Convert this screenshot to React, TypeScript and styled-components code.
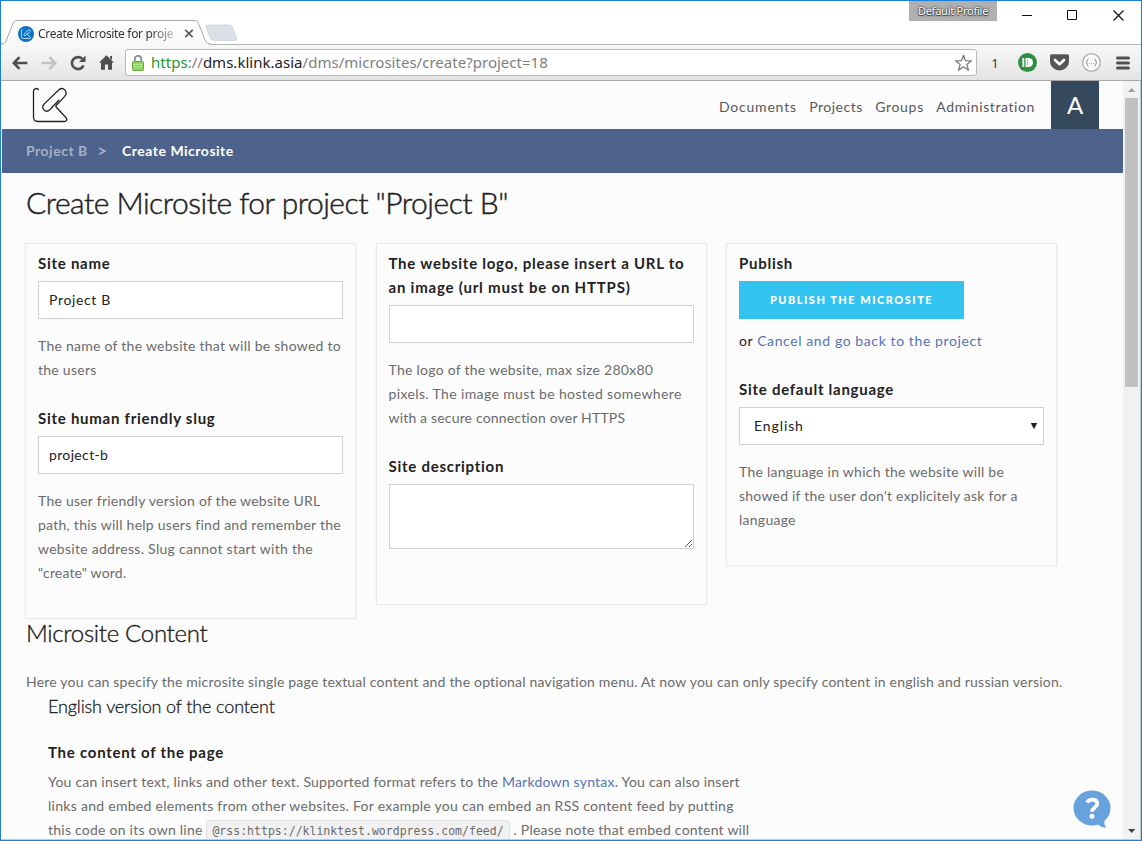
import React from 'react';
import styled, { createGlobalStyle } from 'styled-components';

const GlobalStyle = createGlobalStyle`
  * { box-sizing: border-box; }
  body { margin: 0; background: #fff; }
  p, h1, h2, h3 { margin: 0; font-weight: 400; }
`;

const uiFont = `'Noto Sans', 'Open Sans', sans-serif`;
const siteFont = `Lato, 'Open Sans', sans-serif`;

/* ---------- browser window ---------- */

const Window = styled.div`
  width: 1142px;
  height: 841px;
  border: 1px solid #1c80d8;
  display: flex;
  flex-direction: column;
  overflow: hidden;
  background: #fff;
`;

const TitleBar = styled.div`
  height: 43px;
  flex: none;
  display: flex;
  align-items: flex-start;
`;

const Tab = styled.div`
  position: relative;
  width: 210px;
  height: 25px;
  margin-top: 19px;
  flex: none;
  display: flex;
  align-items: center;
  padding: 2px 0 0 17px;
  z-index: 1;
  svg { flex: none; }
`;

const TabShape = styled.svg`
  position: absolute;
  left: 0;
  top: 0;
  z-index: -1;
`;

const TabTitle = styled.span`
  flex: none;
  width: 146px;
  margin-left: 4px;
  white-space: nowrap;
  font: 12px/16px ${uiFont};
  letter-spacing: -0.32px;
  color: #333;
  mask-image: linear-gradient(to right, #000 112px, transparent 146px);
`;

const NewTab = styled.svg`
  margin: 23px 0 0 -7px;
  flex: none;
`;

const Profile = styled.div`
  width: 88px;
  height: 20px;
  margin-left: auto;
  background: #b0b0b0;
  color: #fff;
  font: 11px/20px ${uiFont};
  letter-spacing: -0.25px;
  text-align: center;
  text-shadow: 0 0 2px #333, 0 0 2px #444, 0 1px 1px #444;
`;

const WindowControls = styled.div`
  display: flex;
  align-items: center;
  gap: 35px;
  height: 28px;
  margin: 0 17px 0 25px;
`;

const Toolbar = styled.div`
  height: 37px;
  flex: none;
  display: flex;
  align-items: center;
  padding: 0 1px 0 4px;
  border-top: 1px solid #b5b5b5;
  border-bottom: 1px solid #a9a9a9;
  background: linear-gradient(#f8f8f8, #e4e4e4);
`;

const ToolCell = styled.div<{ $w: number }>`
  width: ${p => p.$w}px;
  flex: none;
  display: flex;
  justify-content: center;
  font: 13px/18px ${uiFont};
  color: #333;
  svg { display: block; }
`;

const Omnibox = styled.div`
  width: 852px;
  height: 27px;
  flex: none;
  margin: 0 2px 0 4px;
  display: flex;
  align-items: center;
  border: 1px solid #b9b9b9;
  border-radius: 3px;
  background: #fff;
  padding: 0 3px 0 6px;
  svg { flex: none; }
`;

const Url = styled.span`
  flex: 1;
  margin: -2px 0 0 7px;
  font: 15px/22px ${uiFont};
  letter-spacing: 0.02px;
  color: #808080;
  white-space: nowrap;
`;
const Scheme = styled.span`color: #249a33;`;
const Host = styled.span`color: #222;`;

const Viewport = styled.div`
  flex: 1;
  min-height: 0;
  display: flex;
  padding-left: 1px;
  border-right: 1px solid #c9c9c9;
  border-bottom: 1px solid #c9c9c9;
`;

const Page = styled.div`
  position: relative;
  width: 1121px;
  flex: none;
  overflow: hidden;
  background: #fcfcfc;
  font-family: ${siteFont};
  font-size: 14px;
  line-height: 24px;
  color: #222;
`;

const Scrollbar = styled.div`
  flex: 1;
  display: flex;
  flex-direction: column;
  align-items: center;
  background: #f1f1f1;
  svg { display: block; flex: none; }
`;

const Thumb = styled.div`
  width: 13px;
  height: 289px;
  margin-bottom: auto;
  background: #c1c1c1;
`;

/* ---------- site ---------- */

const Header = styled.header`
  height: 48px;
  display: flex;
  align-items: center;
  padding: 0 24px 0 30px;
`;

const Nav = styled.nav`
  display: flex;
  gap: 12.4px;
  margin: 4px 16px 0 auto;
`;

const NavLink = styled.a<{ $track: number }>`
  color: #585858;
  letter-spacing: ${p => p.$track}px;
`;

const Avatar = styled.div`
  width: 48px;
  height: 48px;
  background: #34495e;
  color: #fff;
  font-size: 24px;
  line-height: 47px;
  text-align: center;
`;

const Breadcrumb = styled.div`
  height: 44px;
  display: flex;
  align-items: center;
  padding-left: 24px;
  background: #4d638c;
  color: #fff;
  font-weight: 700;
  letter-spacing: 0.5px;
`;
const Crumb = styled.span`color: #a6b1c8;`;
const Separator = styled(Crumb)`
  margin: 0 14.5px 0 9.5px;
  font-size: 17px;
`;

const Body = styled.main`
  padding: 0 24px;
`;

const PageTitle = styled.h1`
  height: 70px;
  padding-top: 9px;
  font-size: 30px;
  line-height: 40px;
  font-weight: 300;
  letter-spacing: -0.5px;
  -webkit-text-stroke: 0.45px #222;
`;

const Cards = styled.div`
  display: flex;
  align-items: flex-start;
  gap: 19.5px;
  margin-left: -1px;
`;

const Card = styled.section<{ $bottom: number }>`
  width: 331px;
  flex: none;
  padding: 8px 12px ${p => p.$bottom}px;
  border: 1px solid #eaeaea;
  box-shadow: 0 0 2px rgba(0, 0, 0, 0.07);
`;

const Label = styled.label`
  display: block;
  margin: -1px 0 6px;
  font-size: 15px;
  font-weight: 700;
  line-height: 24px;
  letter-spacing: 0.74px;
  white-space: nowrap;
`;

const Input = styled.input<{ $track?: number }>`
  display: block;
  width: 305px;
  height: 38px;
  padding: 5px 10px 7px;
  border: 1px solid #d1d1d1;
  background: #fff;
  color: #222;
  font: 14px ${siteFont};
  letter-spacing: ${p => p.$track ?? 0.35}px;
`;

const TextArea = styled.textarea`
  display: block;
  width: 305px;
  height: 65px;
  border: 1px solid #d1d1d1;
  background: #fff;
`;

const Select = styled.div`
  width: 305px;
  height: 38px;
  display: flex;
  align-items: center;
  justify-content: space-between;
  padding: 0 5px 0 14px;
  border: 1px solid #d1d1d1;
  background: #fff;
  letter-spacing: 0.9px;
`;

const Help = styled.p`
  margin-top: 15px;
  color: #6b6b6b;
  white-space: nowrap;
`;

const Line = styled.span<{ $track?: number }>`
  display: block;
  letter-spacing: ${p => p.$track ?? 0.26}px;
`;

const Field = styled.div`
  & + & { margin-top: 25px; }
  display: flow-root;
`;

const Button = styled.button`
  display: block;
  width: 225px;
  height: 38px;
  border: 0;
  padding: 0 0 2px;
  background: #33c3f0;
  color: #fff;
  font: 900 11px ${siteFont};
  letter-spacing: 1.5px;
`;

const CancelRow = styled.p`
  margin-top: 10px;
  letter-spacing: 0.6px;
`;

const Link = styled.a`color: #5474b4;`;

const SectionTitle = styled.h2`
  font-size: 24px;
  line-height: 32px;
  margin-top: -2px;
  font-weight: 300;
  letter-spacing: -0.31px;
  -webkit-text-stroke: 0.35px #222;
`;

const Intro = styled.p`
  margin-top: 21px;
  color: #6b6b6b;
  white-space: nowrap;
`;

const Content = styled.div`
  padding-left: 22px;
`;

const ContentTitle = styled.h3`
  font-size: 18px;
  line-height: 26px;
  font-weight: 300;
  letter-spacing: -0.13px;
  -webkit-text-stroke: 0.3px #222;
  margin: -1px 0 22px;
`;

const Instructions = styled.div`
  color: #6b6b6b;
  white-space: nowrap;
`;

const Code = styled.code`
  padding: 3px 5px;
  border: 1px solid #e1e1e1;
  border-radius: 4px;
  background: #f1f1f1;
  font: 11.52px 'DejaVu Sans Mono', monospace;
  letter-spacing: 0;
`;

const HelpBubble = styled.svg`
  position: absolute;
  right: 12px;
  bottom: 10px;
`;

const clipPath =
  'M6.200 2.500C5.200.3 1 .3 1 4v25.500C1 32.500 2.500 34 5.500 34H31.500c3 0 3.600-2.200 1.900-4L23.800 19.800c-.7-.8-.7-1.300.1-2.100l8.300-8.800C36 4.500 31-1.200 26.400 2.200L11.800 16.400c-4 4.200 1.300 9.700 5.500 5.800L26.500 12.500';

const BackArrow = ({ color, flip }: { color: string; flip?: boolean }) => (
  <svg width="16" height="14" viewBox="0 0 16 14" transform={flip ? 'scale(-1 1)' : undefined}>
    <path d="M7.500 1.200L1.800 7l5.700 5.800M2.200 7H15.300" fill="none" stroke={color} strokeWidth="2.600" />
  </svg>
);

export default function App() {
  return (
    <Window>
      <GlobalStyle />
      <TitleBar>
        <Tab>
          <TabShape width="210" height="25" viewBox="0 0 210 25">
            <defs>
              <linearGradient id="tab" x1="0" y1="0" x2="0" y2="1">
                <stop offset="0" stopColor="#fff" />
                <stop offset="1" stopColor="#f8f8f8" />
              </linearGradient>
            </defs>
            <path d="M0 24.500C3 24.500 4 23.500 5 21L12 3.500C13 1.200 14 .5 16 .5H193C195.500 .5 196.500 1.200 197.500 3.500L204.500 21C205.500 23.500 207 24.500 210 24.500V26H0Z" fill="url(#tab)" />
            <path d="M0 24C3 24 4 23 5 21L12 3.500C13 1.200 14 .5 16 .5H193C195.500 .5 196.500 1.200 197.500 3.500L204.500 21C205.500 23 207 24 210 24" fill="none" stroke="#a8a8a8" />
          </TabShape>
          <svg width="16" height="16" viewBox="0 0 16 16">
            <circle cx="8" cy="8" r="8" fill="#0d71c4" />
            <path d={clipPath} transform="translate(3.200 3.300) scale(.27)" fill="none" stroke="#cfe5f7" strokeWidth="3.200" />
          </svg>
          <TabTitle>Create Microsite for proje</TabTitle>
          <svg width="10" height="9" viewBox="0 0 10 9">
            <path d="M1.300.8l7.400 7.400M8.700.8L1.300 8.200" stroke="#5a5a5a" strokeWidth="1.700" />
          </svg>
        </Tab>
        <NewTab width="34" height="18" viewBox="0 0 34 18">
          <path d="M4 1H25.500Q27.500 1 28.300 3L32.600 14Q33.500 16.500 31 16.500H10Q7.500 16.500 6.600 14.500L2 3.500Q1.200 1 4 1Z" fill="#dbdfe7" stroke="#cdd0d8" strokeWidth=".8" />
        </NewTab>
        <Profile>Default Profile</Profile>
        <WindowControls>
          <svg width="10" height="10"><path d="M0 5.500H10" stroke="#111" /></svg>
          <svg width="10" height="10"><path d="M.5.5h9v9h-9z" fill="none" stroke="#111" /></svg>
          <svg width="12" height="11"><path d="M1.500.5l10 10M11.500.5l-10 10" stroke="#111" strokeWidth="1.200" /></svg>
        </WindowControls>
      </TitleBar>

      <Toolbar>
        <ToolCell $w={29}><BackArrow color="#4f4f4f" /></ToolCell>
        <ToolCell $w={29}><BackArrow color="#c3c3c3" flip /></ToolCell>
        <ToolCell $w={29}>
          <svg width="16" height="16" viewBox="0 0 16 16">
            <path d="M13.500 10.500A6 6 0 1 1 12.300 3.900" fill="none" stroke="#4f4f4f" strokeWidth="2.600" />
            <path d="M15.500.5V7H9z" fill="#4f4f4f" />
          </svg>
        </ToolCell>
        <ToolCell $w={29}>
          <svg width="15" height="15" viewBox="0 0 15 15">
            <path d="M7.500.2L15 7.800H13V14.700H9V9.500H6V14.700H2V7.800H0L7.500.2ZM11 1h2v4l-2-2z" fill="#4f4f4f" />
          </svg>
        </ToolCell>
        <Omnibox>
          <svg width="12" height="16" viewBox="0 0 12 16">
            <path d="M2.800 8V4a3.200 3.200 0 0 1 6.400 0V8" fill="none" stroke="#8d8d8d" strokeWidth="1.800" />
            <rect x=".5" y="6.500" width="11" height="9" rx="1" fill="#8ed65c" stroke="#6aa84a" />
            <path d="M1.500 9.500h9M1.500 12h9" stroke="#b4ea8c" />
          </svg>
          <Url><Scheme>https</Scheme>://<Host>dms.klink.asia</Host>/dms/microsites/create?project=18</Url>
          <svg width="19" height="18" viewBox="0 0 19 18">
            <path d="M9.500 1.200l2 5.500 6 .1-4.700 3.600 1.700 5.800-5-3.400-5 3.400 1.700-5.800L1.500 6.800l6-.1z" fill="#fff" stroke="#777" strokeWidth="1.200" strokeLinejoin="round" />
          </svg>
        </Omnibox>
        <ToolCell $w={32}>1</ToolCell>
        <ToolCell $w={32}>
          <svg width="19" height="19" viewBox="0 0 19 19">
            <circle cx="9.500" cy="9.500" r="9.500" fill="#2f9140" />
            <path d="M5.300 5v9" stroke="#fff" strokeWidth="1.800" />
            <path d="M7.500 5h3a4.500 4.500 0 0 1 0 9h-3z" fill="#fff" />
            <path d="M9.500 6v7" stroke="#2f9140" strokeWidth=".4" />
          </svg>
        </ToolCell>
        <ToolCell $w={32}>
          <svg width="19" height="17" viewBox="0 0 19 17">
            <path d="M1.500.3h16Q19 .3 19 2v5.500a9.500 9 0 0 1-19 0V2Q0 .3 1.500.3z" fill="#555" />
            <path d="M5 6l4.500 4.300L14 6" fill="none" stroke="#fff" strokeWidth="2.600" strokeLinecap="round" strokeLinejoin="round" />
          </svg>
        </ToolCell>
        <ToolCell $w={32}>
          <svg width="19" height="19" viewBox="0 0 19 19">
            <circle cx="9.500" cy="9.500" r="8.800" fill="#fafafa" stroke="#aaa" strokeWidth="1.200" />
            <path d="M6.500 6C4.500 6 6 9.500 4 9.500c2 0 .5 3.500 2.500 3.500M12.500 6c2 0 .5 3.500 2.500 3.500-2 0-.5 3.500-2.500 3.500" fill="none" stroke="#888" />
            <path d="M7 10.500h1M9 10.500h1M11 10.500h1" stroke="#aaa" />
          </svg>
        </ToolCell>
        <ToolCell $w={32}>
          <svg width="14" height="14" viewBox="0 0 14 14">
            <path d="M1.500 2h11M1.500 7h11M1.500 12h11" stroke="#505050" strokeWidth="3" strokeLinecap="round" />
          </svg>
        </ToolCell>
      </Toolbar>

      <Viewport>
        <Page>
          <Header>
            <svg width="37" height="36" viewBox="-.5 -.5 37 36">
              <path d={clipPath} fill="none" stroke="#222" strokeWidth="1.300" />
            </svg>
            <Nav>
              <NavLink $track={0.8}>Documents</NavLink>
              <NavLink $track={0.5}>Projects</NavLink>
              <NavLink $track={0.7}>Groups</NavLink>
              <NavLink $track={0.6}>Administration</NavLink>
            </Nav>
            <Avatar>A</Avatar>
          </Header>
          <Breadcrumb>
            <Crumb>Project B</Crumb>
            <Separator>&gt;</Separator>
            Create Microsite
          </Breadcrumb>
          <Body>
            <PageTitle>Create Microsite for project "Project B"</PageTitle>
            <Cards>
              <Card $bottom={33}>
                <Field>
                  <Label>Site name</Label>
                  <Input defaultValue="Project B" $track={0.65} />
                  <Help>
                    <Line>The name of the website that will be showed to</Line>
                    <Line>the users</Line>
                  </Help>
                </Field>
                <Field>
                  <Label>Site human friendly slug</Label>
                  <Input defaultValue="project-b" />
                  <Help>
                    <Line $track={0.24}>The user friendly version of the website URL</Line>
                    <Line>path, this will help users find and remember the</Line>
                    <Line $track={0.28}>website address. Slug cannot start with the</Line>
                    <Line $track={0.15}>"create" word.</Line>
                  </Help>
                </Field>
              </Card>
              <Card $bottom={55}>
                <Field>
                  <Label>
                    <Line $track={0.76}>The website logo, please insert a URL to</Line>
                    <Line $track={0.8}>an image (url must be on HTTPS)</Line>
                  </Label>
                  <Input />
                  <Help>
                    <Line>The logo of the website, max size 280x80</Line>
                    <Line $track={0.37}>pixels. The image must be hosted somewhere</Line>
                    <Line $track={0.17}>with a secure connection over HTTPS</Line>
                  </Help>
                </Field>
                <Field>
                  <Label>Site description</Label>
                  <TextArea />
                </Field>
              </Card>
              <Card $bottom={33}>
                <Field>
                  <Label>Publish</Label>
                  <Button>PUBLISH THE MICROSITE</Button>
                  <CancelRow>or <Link>Cancel and go back to the project</Link></CancelRow>
                </Field>
                <Field>
                  <Label>Site default language</Label>
                  <Select>
                    English
                    <svg width="8" height="8" viewBox="0 0 8 8"><path d="M.8 1h6.400L4 7.200z" fill="#222" /></svg>
                  </Select>
                  <Help>
                    <Line>The language in which the website will be</Line>
                    <Line $track={0.23}>showed if the user don't explicitely ask for a</Line>
                    <Line>language</Line>
                  </Help>
                </Field>
              </Card>
            </Cards>
            <SectionTitle>Microsite Content</SectionTitle>
            <Intro>
              <Line $track={0.205}>Here you can specify the microsite single page textual content and the optional navigation menu. At now you can only specify content in english and russian version.</Line>
            </Intro>
            <Content>
              <ContentTitle>English version of the content</ContentTitle>
              <Label>The content of the page</Label>
              <Instructions>
                <Line $track={0.22}>You can insert text, links and other text. Supported format refers to the <Link>Markdown syntax</Link>. You can also insert</Line>
                <Line $track={0.28}>links and embed elements from other websites. For example you can embed an RSS content feed by putting</Line>
                <Line $track={0.24}>this code on its own line <Code>@rss:https://klinktest.wordpress.com/feed/</Code> . Please note that embed content will</Line>
              </Instructions>
            </Content>
          </Body>
          <HelpBubble width="38" height="39" viewBox="0 0 38 39">
            <ellipse cx="19" cy="18" rx="18.500" ry="17.500" fill="#68a2dc" />
            <path d="M24 33c2 3 5 5 9.500 4.500-2-1.500-2.500-4-2-7z" fill="#68a2dc" />
            <path d="M14 12.500c2.800-4.200 10.300-3.500 10.300 1 0 4-5.300 4-5.300 8.300" fill="none" stroke="#fff" strokeWidth="3.800" />
            <circle cx="19" cy="26.300" r="2.500" fill="#fff" />
          </HelpBubble>
        </Page>
        <Scrollbar>
          <svg width="15" height="17"><path d="M4 11h7.500L7.700 7z" fill="#a0a0a0" /></svg>
          <Thumb />
          <svg width="15" height="17"><path d="M4 7h7.500L7.700 11z" fill="#444" /></svg>
        </Scrollbar>
      </Viewport>
    </Window>
  );
}
